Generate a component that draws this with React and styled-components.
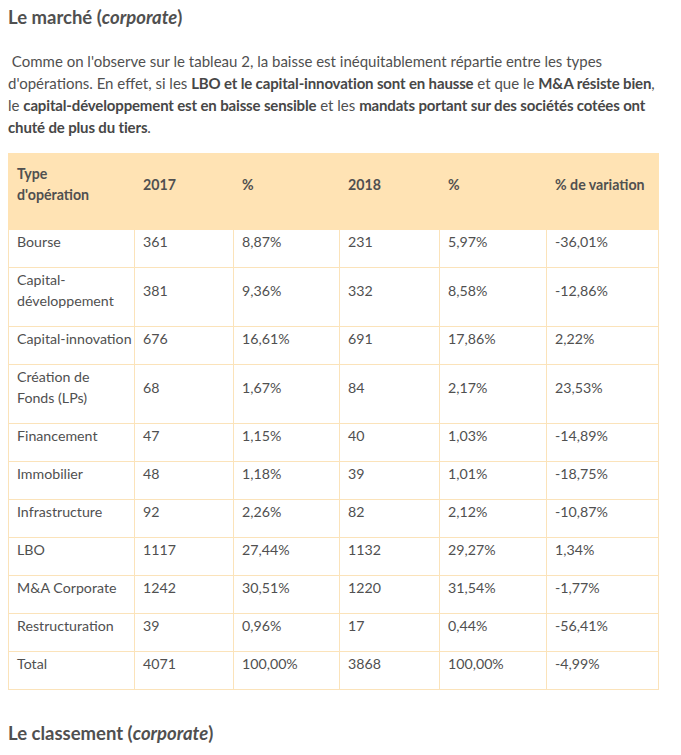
import styled, { createGlobalStyle } from 'styled-components'

const GlobalStyle = createGlobalStyle`
    * { box-sizing: border-box; }
    body {
        margin: 0;
        background: #FFFFFF;
        font-family: Lato, "Open Sans", sans-serif;
        color: #505050;
    }
`;

const rows = [
    ['Bourse', '361', '8,87%', '231', '5,97%', '-36,01%'],
    ['Capital-\ndéveloppement', '381', '9,36%', '332', '8,58%', '-12,86%'],
    ['Capital-innovation', '676', '16,61%', '691', '17,86%', '2,22%'],
    ['Création de\nFonds (LPs)', '68', '1,67%', '84', '2,17%', '23,53%'],
    ['Financement', '47', '1,15%', '40', '1,03%', '-14,89%'],
    ['Immobilier', '48', '1,18%', '39', '1,01%', '-18,75%'],
    ['Infrastructure', '92', '2,26%', '82', '2,12%', '-10,87%'],
    ['LBO', '1117', '27,44%', '1132', '29,27%', '1,34%'],
    ['M&A Corporate', '1242', '30,51%', '1220', '31,54%', '-1,77%'],
    ['Restructuration', '39', '0,96%', '17', '0,44%', '-56,41%'],
    ['Total', '4071', '100,00%', '3868', '100,00%', '-4,99%'],
];

const headers = ["Type\nd'opération", '2017', '%', '2018', '%', '% de variation'];
const widths = [126, 99, 106, 100, 107, 112];

export default function App() {
    return (
        <>
            <GlobalStyle />
            <Page>
                <Title>Le marché (<em>corporate</em>)</Title>
                <Text>
                    &nbsp;Comme on l'observe sur le tableau 2, la baisse est inéquitablement répartie entre les types<br />
                    d'opérations. En effet, si les <b>LBO et le capital-innovation sont en hausse</b> et que le <b>M&amp;A résiste bien</b>,<br />
                    le <b>capital-développement est en baisse sensible</b> et les <b>mandats portant sur des sociétés cotées ont</b><br />
                    <b>chuté de plus du tiers</b>.
                </Text>
                <Table>
                    <colgroup>
                        {widths.map((w, i) => <col key={i} style={{ width: w }} />)}
                    </colgroup>
                    <thead>
                        <tr>
                            {headers.map((h, i) => <Th key={i}>{h}</Th>)}
                        </tr>
                    </thead>
                    <tbody>
                        {rows.map((r) => (
                            <tr key={r[0]}>
                                {r.map((c, i) => <Td key={i}>{c}</Td>)}
                            </tr>
                        ))}
                    </tbody>
                </Table>
                <Title2>Le classement (<em>corporate</em>)</Title2>
            </Page>
        </>
    )
}

const Page = styled.main`
    padding: 4px 8px 0 8px;
    width: 681px;
`;
const Title = styled.h2`
    margin: 0 0 20px 0;
    font-size: 18.5px;
    line-height: 26px;
    font-weight: 700;
    color: #505050;
    em { font-style: italic; }
`;
const Title2 = styled(Title)`
    margin-top: 30px;
`;
const Text = styled.p`
    margin: 0 0 15px 0;
    font-size: 15px;
    line-height: 22px;
    white-space: nowrap;
    b { font-weight: 700; color: #474747; letter-spacing: -0.15px; }
`;
const Table = styled.table`
    border-collapse: collapse;
    table-layout: fixed;
    width: 650px;
    font-size: 14.2px;
    line-height: 21px;
`;
const Th = styled.th`
    background: #FFE3B4;
    border: 1px solid #FFE3B4;
    text-align: left;
    vertical-align: middle;
    font-weight: 700;
    white-space: pre;
    padding: 9px 2px 24px 8px;
    height: 76px;
`;
const Td = styled.td`
    border: 1px solid #FBE3BA;
    vertical-align: middle;
    white-space: pre;
    padding: 1px 2px 15px 8px;
    height: 38px;
`;
